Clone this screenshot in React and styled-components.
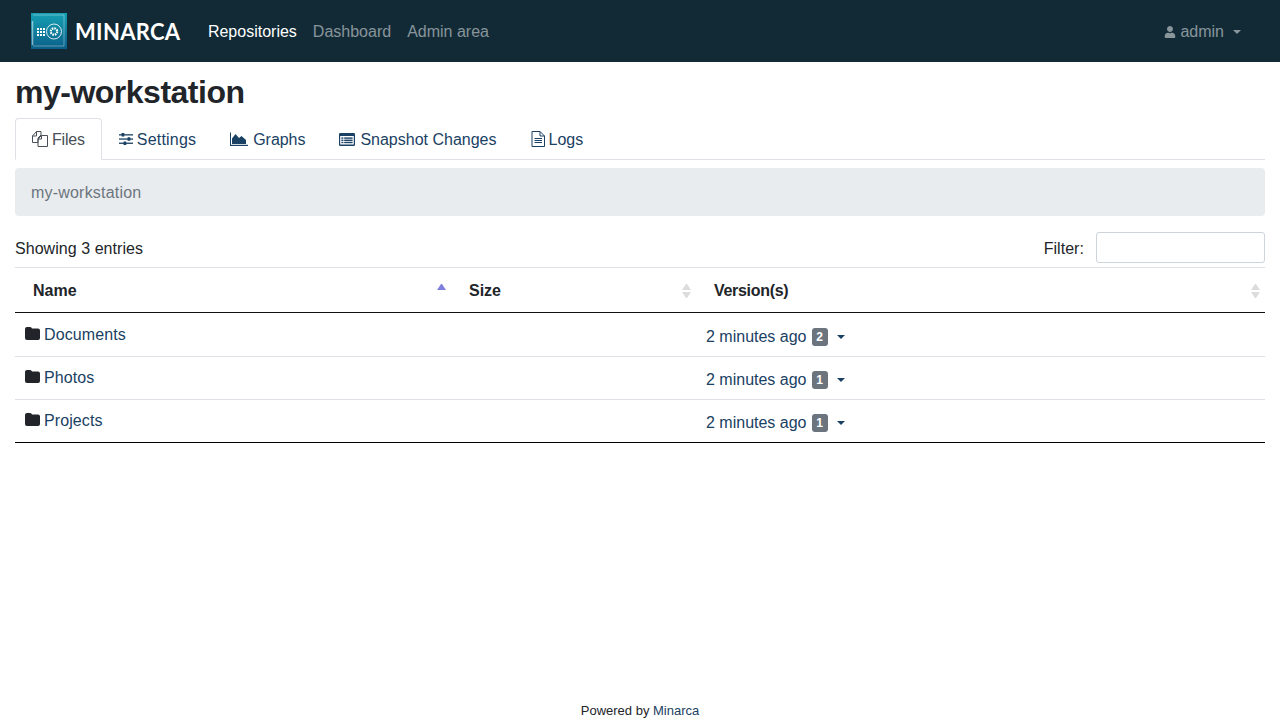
import React from "react";
import styled, { createGlobalStyle } from "styled-components";
import { FaUser } from "react-icons/fa";

const rows = [
  { name: "Documents", versions: 2 },
  { name: "Photos", versions: 1 },
  { name: "Projects", versions: 1 },
];

const GlobalStyle = createGlobalStyle`
  * { box-sizing: border-box; }
  html, body { margin: 0; padding: 0; }
  body {
    font-family: "Liberation Sans", Arial, sans-serif;
    font-size: 16px;
    line-height: 1.5;
    color: #212529;
    background: #fff;
  }
  a { color: #1a4163; text-decoration: none; }
`;

const FilesIcon = () => (
  <svg width="16" height="16" viewBox="0 0 16 16" fill="none" stroke="currentColor" strokeWidth="1">
    <path d="M.5 5 L4.5 .5 H9 V4 L6 7 V11.5 H.5 Z M4.5 .5 V5 H.5" />
    <path d="M6 8 L9.5 4.5 H15.5 V15.5 H6 Z M9.5 4.5 V8 H6" />
  </svg>
);

const SlidersIcon = () => (
  <svg width="14" height="14" viewBox="0 0 14 14" fill="currentColor">
    <rect x="0" y="2.2" width="14" height="1.3" />
    <rect x="0" y="6.4" width="14" height="1.3" />
    <rect x="0" y="10.6" width="14" height="1.3" />
    <rect x="2.5" y="1" width="2.8" height="3.6" rx="0.5" />
    <rect x="8.5" y="5.2" width="2.8" height="3.6" rx="0.5" />
    <rect x="4.5" y="9.4" width="2.8" height="3.6" rx="0.5" />
  </svg>
);

const ChartIcon = () => (
  <svg width="18" height="14" viewBox="0 0 18 14" fill="currentColor">
    <rect x="0" y="0.5" width="1" height="13" />
    <rect x="0" y="12.8" width="18" height="1.2" />
    <path d="M2 12 V6.5 L5.5 2 L9 6 L11.5 4 L16 8 V12 Z" />
  </svg>
);

const ListIcon = () => (
  <svg width="16" height="13" viewBox="0 0 16 13" fill="currentColor">
    <path
      fillRule="evenodd"
      d="M1.2 0 H14.8 A1.2 1.2 0 0 1 16 1.2 V11.8 A1.2 1.2 0 0 1 14.8 13 H1.2 A1.2 1.2 0 0 1 0 11.8 V1.2 A1.2 1.2 0 0 1 1.2 0 Z M1.2 3 V11.6 H14.8 V3 Z"
    />
    <rect x="2.4" y="4.4" width="2" height="1.4" />
    <rect x="5.2" y="4.4" width="8.4" height="1.4" />
    <rect x="2.4" y="6.6" width="2" height="1.4" />
    <rect x="5.2" y="6.6" width="8.4" height="1.4" />
    <rect x="2.4" y="8.8" width="2" height="1.4" />
    <rect x="5.2" y="8.8" width="8.4" height="1.4" />
  </svg>
);

const LogIcon = () => (
  <svg width="14" height="16" viewBox="0 0 14 16" fill="none" stroke="currentColor" strokeWidth="1">
    <path d="M1 .5 H9 L13.5 5 V15.5 H1 Z M9 .5 V5 H13.5" />
    <path d="M3.5 7.5 H11 M3.5 9.5 H11 M3.5 11.5 H11" />
  </svg>
);

const FolderIcon = () => (
  <svg width="15" height="13" viewBox="0 0 15 13" fill="#212529">
    <path d="M2 0 H5 A2 2 0 0 1 7 1.6 H13 A2 2 0 0 1 15 3.6 V11 A2 2 0 0 1 13 13 H2 A2 2 0 0 1 0 11 V2 A2 2 0 0 1 2 0 Z" />
  </svg>
);

const Logo = () => (
  <svg width="36" height="36" viewBox="0 0 36 36">
    <defs>
      <linearGradient id="logoBg" x1="0" y1="0" x2="0" y2="1">
        <stop offset="0" stopColor="#16a0b4" />
        <stop offset="1" stopColor="#0a5f88" />
      </linearGradient>
    </defs>
    <rect width="36" height="36" fill="url(#logoBg)" />
    <path d="M2 2 H33 V33 H2" fill="none" stroke="#ffffff" strokeOpacity="0.35" strokeWidth="1" />
    <path d="M1.5 8 V32" stroke="#ffffff" strokeOpacity="0.5" strokeWidth="1.5" />
    <g fill="#fff">
      <rect x="6" y="15" width="2" height="2" />
      <rect x="9" y="15" width="2" height="2" />
      <rect x="12" y="15" width="2" height="2" />
      <rect x="6" y="18" width="2" height="2" />
      <rect x="9" y="18" width="2" height="2" />
      <rect x="12" y="18" width="2" height="2" />
      <rect x="6" y="21" width="2" height="2" />
      <rect x="9" y="21" width="2" height="2" />
      <rect x="12" y="21" width="2" height="2" />
    </g>
    <circle cx="23" cy="18.5" r="7.5" fill="none" stroke="#ffffff" strokeOpacity="0.85" strokeWidth="1" />
    <circle cx="23" cy="18.5" r="3.2" fill="none" stroke="#fff" strokeWidth="2.2" strokeDasharray="1.6 0.9" />
  </svg>
);

export default function App() {
  return (
    <Page>
      <GlobalStyle />
      <Navbar>
        <Brand href="#">
          <Logo />
          <BrandName>MINARCA</BrandName>
        </Brand>
        <NavLinks>
          <NavLink href="#" $active>
            Repositories
          </NavLink>
          <NavLink href="#">Dashboard</NavLink>
          <NavLink href="#">Admin area</NavLink>
        </NavLinks>
        <UserMenu href="#">
          <FaUser size={12} />
          admin
          <NavCaret />
        </UserMenu>
      </Navbar>
      <Main>
        <Title>my-workstation</Title>
        <Tabs>
          <Tab href="#" $active>
            <FilesIcon /> <TabLabel $track={-0.2}>Files</TabLabel>
          </Tab>
          <Tab href="#">
            <SlidersIcon /> <TabLabel $track={0.2}>Settings</TabLabel>
          </Tab>
          <Tab href="#">
            <ChartIcon /> <TabLabel $track={-0.05} $offset>Graphs</TabLabel>
          </Tab>
          <Tab href="#">
            <ListIcon /> <TabLabel $offset>Snapshot Changes</TabLabel>
          </Tab>
          <Tab href="#">
            <LogIcon /> <TabLabel>Logs</TabLabel>
          </Tab>
        </Tabs>
        <Breadcrumb>my-workstation</Breadcrumb>
        <TableTools>
          <ToolText>Showing 3 entries</ToolText>
          <FilterLabel>
            <ToolText>Filter:</ToolText>
            <FilterInput type="text" />
          </FilterLabel>
        </TableTools>
        <Table>
          <colgroup>
            <col style={{ width: 436 }} />
            <col style={{ width: 245 }} />
            <col />
          </colgroup>
          <thead>
            <tr>
              <Th>
                <ThInner>
                  Name
                  <Sort $up />
                </ThInner>
              </Th>
              <Th>
                <ThInner>
                  Size
                  <Sort />
                </ThInner>
              </Th>
              <Th>
                <ThInner>
                  <Narrow>Version(s)</Narrow>
                  <Sort />
                </ThInner>
              </Th>
            </tr>
          </thead>
          <tbody>
            {rows.map((row, i) => (
              <tr key={row.name}>
                <Td $first={i === 0}>
                  <NameCell>
                    <FolderIcon />
                    <a href="#">{row.name}</a>
                  </NameCell>
                </Td>
                <Td $first={i === 0} />
                <Td $first={i === 0}>
                  <VersionCell href="#">
                    2 minutes ago
                    <Badge>{row.versions}</Badge>
                    <RowCaret />
                  </VersionCell>
                </Td>
              </tr>
            ))}
          </tbody>
        </Table>
      </Main>
      <Footer>
        Powered by <a href="#">Minarca</a>
      </Footer>
    </Page>
  );
}

const Page = styled.div`
  min-height: 100vh;
  display: flex;
  flex-direction: column;
`;

const Navbar = styled.nav`
  height: 62px;
  background: #112a36;
  display: flex;
  align-items: center;
  padding: 0 39px 0 31px;
`;

const Brand = styled.a`
  display: flex;
  align-items: center;
  gap: 8px;
  margin-right: 27.5px;
  && {
    color: #fff;
  }
`;

const BrandName = styled.span`
  font-family: Lato, sans-serif;
  font-size: 22px;
  font-weight: 700;
  letter-spacing: 0.3px;
`;

const NavLinks = styled.div`
  display: flex;
  gap: 16px;
  flex: 1;
  padding-top: 2px;
`;

const NavLink = styled.a`
  && {
    color: ${(p) => (p.$active ? "#fff" : "rgba(255,255,255,0.5)")};
  }
`;

const UserMenu = styled.a`
  display: flex;
  align-items: center;
  gap: 4px;
  padding-top: 2px;
  && {
    color: rgba(255, 255, 255, 0.5);
  }
`;

const NavCaret = styled.span`
  margin-left: 5px;
  border-top: 4.8px solid currentColor;
  border-left: 4.8px solid transparent;
  border-right: 4.8px solid transparent;
`;

const Main = styled.main`
  padding: 6px 15px 0;
`;

const Title = styled.h1`
  margin: 0 0 2px;
  font-size: 32px;
  line-height: 48px;
  font-weight: 700;
  letter-spacing: -0.5px;
`;

const Tabs = styled.div`
  display: flex;
  border-bottom: 1px solid #dee2e6;
  height: 42px;
`;

const Tab = styled.a`
  display: flex;
  align-items: center;
  gap: 4px;
  padding: 0 16px;
  height: 42px;
  border: 1px solid ${(p) => (p.$active ? "#dee2e6" : "transparent")};
  border-bottom-color: ${(p) => (p.$active ? "#fff" : "transparent")};
  border-radius: 4px 4px 0 0;
  && {
    color: ${(p) => (p.$active ? "#495057" : "#1a4163")};
  }
`;

const TabLabel = styled.span`
  padding-top: 2px;
  letter-spacing: ${(p) => p.$track || 0}px;
  ${(p) => p.$offset && "margin-left: 1px;"}
`;

const Breadcrumb = styled.div`
  margin-top: 8px;
  padding: 13px 16px 11px;
  background: #e9ecef;
  border-radius: 4px;
  color: #6c757d;
  letter-spacing: 0.2px;
`;

const TableTools = styled.div`
  display: flex;
  justify-content: space-between;
  align-items: center;
  margin-top: 16px;
  height: 31px;
`;

const ToolText = styled.span`
  padding-top: 2px;
  letter-spacing: 0.05px;
`;

const FilterLabel = styled.label`
  display: flex;
  align-items: center;
  gap: 12px;
`;

const FilterInput = styled.input`
  width: 169px;
  height: 31px;
  padding: 4px 8px;
  border: 1px solid #ced4da;
  border-radius: 3px;
  background: #fff;
`;

const Table = styled.table`
  width: 100%;
  margin-top: 4px;
  border-collapse: collapse;
  table-layout: fixed;
  border-bottom: 1px solid #000;
`;

const Th = styled.th`
  height: 45px;
  padding: 0 5px 0 18px;
  border-top: 1px solid #dee2e6;
  border-bottom: 1px solid #111;
  text-align: left;
  font-weight: 700;
`;

const ThInner = styled.div`
  display: flex;
  justify-content: space-between;
  align-items: center;
  padding-top: 1px;
`;

const Narrow = styled.span`
  letter-spacing: -0.3px;
`;

const Sort = styled.span`
  display: inline-flex;
  flex-direction: column;
  gap: 2px;
  width: 9px;
  &::before,
  &::after {
    content: "";
    border-left: 4.5px solid transparent;
    border-right: 4.5px solid transparent;
  }
  &::before {
    border-bottom: 6px solid ${(p) => (p.$up ? "#7f7fdc" : "#dcdcdc")};
  }
  &::after {
    border-top: 6px solid ${(p) => (p.$up ? "transparent" : "#dcdcdc")};
  }
`;

const Td = styled.td`
  height: ${(p) => (p.$first ? 44 : 43)}px;
  padding: ${(p) => (p.$first ? "1px" : "0")} 10px 0;
  border-top: 1px solid #dee2e6;
`;

const NameCell = styled.div`
  display: flex;
  align-items: center;
  gap: 4px;
  letter-spacing: 0.1px;
  svg {
    margin-top: -3px;
  }
`;

const VersionCell = styled.a`
  display: flex;
  align-items: center;
  padding-top: 4px;
`;

const Badge = styled.span`
  display: inline-block;
  margin-left: 5px;
  min-width: 16px;
  padding: 3px 4px;
  font-size: 12px;
  font-weight: 700;
  line-height: 1;
  text-align: center;
  color: #fff;
  background: #6c757d;
  border-radius: 3px;
`;

const RowCaret = styled.span`
  margin-left: 9px;
  border-top: 4.8px solid currentColor;
  border-left: 4.8px solid transparent;
  border-right: 4.8px solid transparent;
`;

const Footer = styled.footer`
  margin-top: auto;
  height: 19px;
  font-size: 13px;
  line-height: 20px;
  text-align: center;
`;
